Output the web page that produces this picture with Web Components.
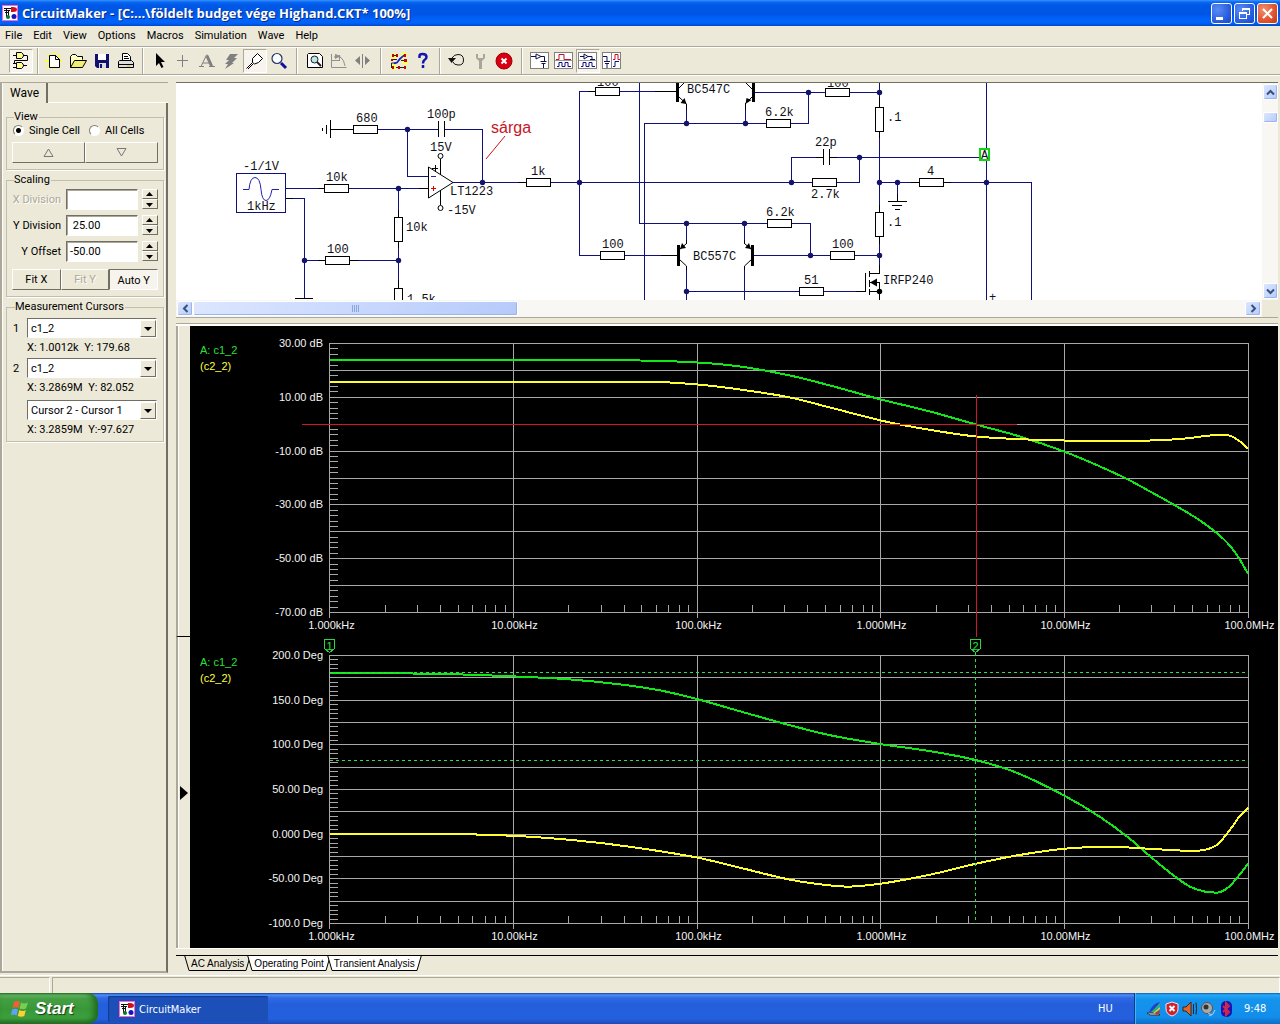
<!DOCTYPE html>
<html lang="hu">
<head>
<meta charset="utf-8">
<title>CircuitMaker</title>
<style>
html,body{margin:0;height:100%}
body{background:#ece9d8;font:11px Roboto,"Liberation Sans",sans-serif;color:#000;
--face:#ece9d8;--shade:#aca899;--dark:#716f64;--ui:"DejaVu Sans Condensed","Noto Sans",sans-serif}
</style>
</head>
<body>
<cm-app></cm-app>
<script>
const define = (name, css, html, setup) => customElements.define(name, class extends HTMLElement {
  connectedCallback() {
    if (this.shadowRoot) return;
    const root = this.attachShadow({ mode: 'open' });
    const t = document.createElement('template');
    t.innerHTML = `<style>*{box-sizing:border-box}button,input,select{font:inherit;color:inherit;margin:0;padding:0;border-radius:0}svg{display:block}${css}</style>` +
      (typeof html === 'function' ? html(this) : html);
    root.append(t.content.cloneNode(true));
    if (setup) setup(this, root);
  }
});

/* ---------- application mark ---------- */
define('cm-logo', ':host{display:block;width:16px;height:16px}', `
<svg width="16" height="16" viewBox="0 0 16 16" shape-rendering="crispEdges">
<rect x=".5" y=".5" width="15" height="15" fill="#fff" stroke="#f6c"/>
<path d="M2 3.500h8M2 5.500h6M4.500 3v9M3 7.500h3M6.500 5v6" stroke="#111" fill="none"/>
<g shape-rendering="auto"><path d="M9 2h2q4 0 4 2.500t-4 2.500H9z" fill="#d01020"/><circle cx="6" cy="12" r="2" fill="#0a7a30"/><circle cx="12" cy="11.500" r="2.500" fill="#1414c0"/></g>
</svg>`);

/* ---------- title bar ---------- */
define('title-bar', `
:host{display:flex;align-items:center;height:26px;flex:none;padding:0 2px;gap:4px;color:#fff;
background:linear-gradient(#3a94ff 0,#0a6af4 2px,#0058e6 5px,#0055e5 14px,#0064fb 20px,#0062fa 23px,#0049c8 26px)}
h1{margin:0;flex:1;font:bold 13px/24px "Open Sans","Trebuchet MS",sans-serif;text-shadow:1px 1px #0a2a80;white-space:nowrap;overflow:hidden}
.b{display:flex;gap:2px}
button{width:21px;height:21px;border:1px solid #fff;border-radius:3px;background:radial-gradient(circle at 30% 30%,#5a8cf4,#2458dc 70%,#1c48c0)}
button.x{background:radial-gradient(circle at 30% 30%,#f09070,#e0522c 60%,#c03a18)}
`, `<cm-logo></cm-logo><h1>CircuitMaker - [C:...\\földelt budget vége Highand.CKT* 100%]</h1>
<div class="b">
<button aria-label="Minimize"><svg width="19" height="19"><path d="M4 13h7v3h-7z" fill="#fff"/></svg></button>
<button aria-label="Restore"><svg width="19" height="19" fill="none" stroke="#fff" shape-rendering="crispEdges"><path d="M7.500 7V4.500h7v6H12M7 5h8" /><path d="M4.500 8.500h7v6h-7zM4 9.500h8"/></svg></button>
<button class="x" aria-label="Close"><svg width="19" height="19"><path d="M5 5l9 9M14 5l-9 9" stroke="#fff" stroke-width="2"/></svg></button>
</div>`);

/* ---------- menu ---------- */
define('menu-bar', `
:host{display:flex;height:22px;flex:none;padding:0 5px;gap:11px;background:var(--face);border-bottom:1px solid #fff;box-shadow:inset 0 -1px var(--shade)}
button{background:none;border:0;height:19px;line-height:19px}
`, ['File','Edit','View','Options','Macros','Simulation','Wave','Help'].map(m => `<button>${m}</button>`).join(''));

/* ---------- toolbar ---------- */
const I = {
gates:`<g fill="#ffff90" stroke="#000"><path d="M5.500 1.500h5q4 3 0 6h-5z"/><path d="M5.500 11.500h5q4 3 0 6h-5z"/></g><path d="M2 4.500h3M12 4.500h4M2 12.500h3M2 16.500h3M12 14.500h4M3.500 9.500h13v-5M3.500 9.500v3" stroke="#000"/>`,
neu:`<path d="M4 4l12 12M16 4L3 16M10 1v17M1 10h17" stroke="#ffff30" stroke-width="2"/><path d="M5.500 4.500h6l4 4v8h-10z" fill="#fff" stroke="#000"/><path d="M11.500 4v4.500H16" stroke="#000"/>`,
open:`<path d="M2.500 16.500v-11l2-2h3l2 2h5v3" fill="#ffffc0" stroke="#000"/><path d="M2.500 16.500l4-7h12l-4 7z" fill="#f4ee70" stroke="#000"/>`,
save:`<path d="M3 3h14v14h-12l-2-2z" fill="#101070"/><path d="M6 3h8v6h-8z" fill="#fff"/><path d="M7 12h7v5h-7z" fill="#ddd"/><path d="M8 13h2v4h-2z" fill="#101070"/>`,
print:`<path d="M6.500 9.500v-7h5l3 3v4" fill="#fff" stroke="#000"/><path d="M8 5.500h4M8 7.500h5" stroke="#000"/><path d="M3.500 9.500h12l2 2v5h-15v-6z" fill="#ddd" stroke="#000"/><path d="M3 13.500h15" stroke="#000"/><path d="M11 15h3" stroke="#cc0" stroke-width="1"/>`,
arrow:`<path d="M7 2v13l3-3 2.500 5 2-1-2.500-5h4z" fill="#000"/>`,
plus:`<path d="M9.500 4v12M4 9.500h11" stroke="#808080"/>`,
big:`<path d="M4 15.500L9.500 4h1l5 11.500M6 12h7M2 15.500h5M12 15.500h6" stroke="#808080" stroke-width="1"/><path d="M10 5l4.500 10" stroke="#808080" stroke-width="3"/>`,
bolt:`<path d="M9 3h8l-4 4h3l-5 5h2l-9 6 3-5h-3l4-4h-3z" fill="#808080"/>`,
probe:`<path d="M1.500 17.500l6-6M3 18l5-5" stroke="#000"/><path d="M7.500 11.500v-4l5-5 5 5-4 4-4 1.500z" fill="#fff" stroke="#000"/>`,
zoom:`<circle cx="8" cy="7.500" r="5" fill="#f8ffff" stroke="#303060" stroke-width="1.200"/><path d="M12 12l5 5" stroke="#1010a0" stroke-width="3"/>`,
fit:`<path d="M3.500 2.500h11l3 3v11h-15v-13z" stroke="#000" fill="#fff"/><circle cx="9.500" cy="8.500" r="3.500" fill="#b8e8e8" stroke="#222"/><path d="M12 11l4 4" stroke="#222" stroke-width="2"/>`,
rot:`<path d="M2.500 3v13.500h15M2 9.500h8M10.500 4v6M5 6q9-3 11 9" stroke="#909090"/><path d="M12 5l-6-2v5z" fill="#909090"/>`,
flip:`<path d="M9.500 3v14" stroke="#808080"/><path d="M7 5v9l-5-4.500zM12 5v9l5-4.500z" fill="#808080"/>`,
wires:`<g fill="#ffff60"><circle cx="5" cy="5" r="3"/><circle cx="15" cy="4" r="3"/><circle cx="5" cy="16" r="3"/><circle cx="16" cy="11" r="3"/></g><path d="M2.500 17v-5h5l8-8M3 8.500h5M12 9.500h5M3 4.500h5M7 16.500h10" stroke="#222"/><path d="M5 12.500l3-1 3-4 5-4" stroke="#1020d0" stroke-width="1.500"/><g fill="#c00018"><path d="M3 3h2v3h-2zM7 3h2v3h-2zM15 3h2v3h-2zM2 8h2v2h-2zM15 8h3v3h-3zM3 15h2v3h-2zM9 15h2v3h-2zM15 15h2v3h-2z"/></g>`,
help:`<path d="M6.500 7V5q0-2 3-2 4 0 4 3 0 2-2 3-1.500 1-1.500 3.500M10 14v3" stroke="#1414b0" stroke-width="2.500"/>`,
undo:`<path d="M6 7q2-3.500 6-3.500 5.500 0 5.500 5.500t-5.500 5q-4 0-5-3" stroke="#111"/><path d="M2 7h8l-4.500 5z" fill="#111"/>`,
wrench:`<path d="M6 3v4l3 3v8h3v-8l3-3v-4h-2v4h-5v-4z" fill="#a8a59a"/>`,
stop:`<circle cx="10" cy="10" r="8" fill="#d80010" stroke="#900"/><path d="M7.500 7.500l5 5M12.500 7.500l-5 5" stroke="#fff" stroke-width="2"/>`,
v1:`<rect x=".5" y="1.500" width="18" height="16" fill="#fff" stroke="#808080"/><path d="M1 5.500h5M11 5.500h3.500v5M10.500 10.500h6M11.500 12.500h4M13.500 13v4" stroke="#101050"/><path d="M6 3l5 2.500L6 8z" stroke="#101050" fill="#fff"/>`,
v2:`<rect x=".5" y="1.500" width="18" height="16" fill="#fff" stroke="#808080"/><path d="M2 8.500h3v-5h5v5h7" stroke="#c01020"/><path d="M1 9.500h17" stroke="#999"/><path d="M3 15.500h2v-4h3v4h3v-4h3v4h3" stroke="#101080"/>`,
v3:`<rect x=".5" y="1.500" width="18" height="16" fill="#fff" stroke="#808080"/><path d="M2 5.500h4M10 5.500h4v3M12 8.500h5" stroke="#101050"/><path d="M6 3l4 2.500L6 8z" stroke="#101050" fill="#fff"/><path d="M1 9.500h17" stroke="#999"/><path d="M3 15.500h2v-4h3v4h3v-4h3v4h3" stroke="#101080"/>`,
v4:`<rect x=".5" y="1.500" width="18" height="16" fill="#fff" stroke="#808080"/><path d="M1 5.500h4v5M2 10.500h6M3 12.500h4M5 13v4" stroke="#101050"/><path d="M9.500 2v15" stroke="#888"/><path d="M11 8.500h2v-5h3v5h2" stroke="#c01020"/><path d="M11 15.500h2v-5h4" stroke="#101080"/>`
};
define('tool-button', `
:host{display:block;width:24px;height:24px}
button{width:24px;height:24px;border:1px solid transparent;background:none;display:grid;place-items:center}
:host([pressed]) button{border-color:var(--shade) #fff #fff var(--shade);background:#f6f4ec}
`, el => `<button aria-label="${el.getAttribute('icon')}"><svg width="20" height="20" viewBox="0 0 20 20" fill="none">${I[el.getAttribute('icon')]}</svg></button>`);
const tools = [['gates!'],['neu','open','save','print'],['arrow','plus','big','bolt','probe!','zoom'],['fit','rot','flip'],['wires','help'],['undo','wrench','stop'],['v1','v2','v3!','v4']];
const wide = [3,4,6];
define('tool-bar', `
:host{display:flex;align-items:center;height:28px;flex:none;padding:0 9px 2px;border-bottom:1px solid #fff;box-shadow:inset 0 -1px var(--shade)}
i{width:9px;height:26px;display:flex;justify-content:center}
i.w{width:12px}
i::before{content:"";border-left:1px solid var(--shade);border-right:1px solid #fff}
`, tools.map((g, n) => (n ? `<i class="${wide.includes(n) ? 'w' : ''}"></i>` : '') +
  g.map(k => `<tool-button icon="${k.replace('!','')}"${k.endsWith('!') ? ' pressed' : ''}></tool-button>`).join('')).join(''));

/* ---------- side panel ---------- */
const up = '<svg width="15" height="9"><path d="M7.500 2l3.500 4h-7z"/></svg>', down = '<svg width="15" height="9"><path d="M7.500 7l3.500-4h-7z"/></svg>';
define('spin-row', `
:host{display:flex;height:26px;align-items:center;justify-content:flex-end;gap:4px}
label{margin-right:1px}
:host([off]) label{color:var(--shade);text-shadow:1px 1px #fff}
input{width:72px;height:21px;padding:0 3px;background:#fff;border:1px solid;border-color:var(--dark) #fff #fff var(--dark);box-shadow:inset 1px 1px #aca899}
div{display:grid;width:16px}
button{height:10px;background:var(--face);border:1px solid;border-color:#fff var(--dark) var(--dark) #fff}
svg{margin:-1px}
`, el => `<label for="v">${el.getAttribute('label')}</label><input id="v" value="${el.getAttribute('value') || ''}"${el.hasAttribute('off') ? ' disabled' : ''}><div><button aria-label="Up">${up}</button><button aria-label="Down">${down}</button></div>`);
define('cursor-select', `
:host{display:grid;grid-template-columns:14px 130px;align-items:center}
div{position:relative}
select{appearance:none;width:100%;height:20px;background:#fff;padding-left:3px;border:1px solid;border-color:var(--dark) #fff #fff var(--dark);outline:0}
span{position:absolute;right:1px;top:2px;width:16px;height:17px;background:var(--face);border:1px solid;border-color:#fff var(--dark) var(--dark) #fff;pointer-events:none;display:grid;place-items:center}
output{grid-column:2;line-height:20px;white-space:pre}
`, el => `<label for="s">${el.getAttribute('label') || ''}</label><div><select id="s" aria-label="Cursor trace"><option>${el.getAttribute('value')}</option></select><span><svg width="8" height="4"><path d="M0 0h8l-4 4z"/></svg></span></div><output>${el.getAttribute('reading')}</output>`);
define('wave-panel', `
:host{display:flex;flex-direction:column;width:168px;flex:none;border-left:2px solid var(--shade);box-shadow:inset 1px 0 #fff;border-top:1px solid var(--shade);margin-right:5px}
nav{display:flex;height:20px}
nav button{width:46px;border:0;background:none;border-right:2px solid var(--dark);font-size:12px;text-align:left;padding:0 0 0 8px}
nav::after{content:"";flex:1;border-bottom:1px solid #fff}
section{flex:1;border-right:2px solid var(--dark);border-bottom:2px solid var(--shade);padding:8px 2px 0 4px;display:flex;flex-direction:column;gap:4px}
fieldset{margin:0;min-width:0;border:1px solid #c2beac;box-shadow:1px 1px #fff;padding:0 5px 6px}
legend{padding:0 1px 0 0;margin-left:2px;line-height:12px;background:var(--face)}
.r{display:flex;align-items:center;height:15px;gap:5px;margin:0 0 4px 1px}
.r label{margin-right:4px}
input[type=radio]{appearance:none;width:11px;height:11px;margin:0;border-radius:50%;background:#fff;border:1px solid;border-color:#808070 #fff #fff #808070;flex:none}
input[type=radio]:checked{background:radial-gradient(circle,#000 2px,#fff 3px)}
.b{display:flex}
spin-row + .b{margin-top:5px}
.b button{flex:1;height:21px;background:var(--face);border:1px solid;border-color:#fff var(--dark) var(--dark) #fff;display:grid;place-items:center}
.b button.p{border-color:var(--dark) #fff #fff var(--dark);background:#f6f4ec;padding-top:2px}
.b button:disabled{color:var(--shade);text-shadow:1px 1px #fff}
.c{display:grid;padding:0 5px 1px 6px}
legend + cursor-select{margin-top:5px}
cursor-select:last-child{margin-top:2px}
`, `<nav><button>Wave</button></nav><section>
<fieldset><legend>View</legend><div class="r"><input type="radio" name="v" id="a" checked><label for="a">Single Cell</label><input type="radio" name="v" id="b"><label for="b">All Cells</label></div>
<div class="b"><button aria-label="Previous"><svg width="11" height="9" fill="none" stroke="#777"><path d="M5.500 1l4.500 7.500H1z"/></svg></button><button aria-label="Next"><svg width="11" height="9" fill="none" stroke="#777"><path d="M5.500 8l4.500-7.500H1z"/></svg></button></div></fieldset>
<fieldset><legend>Scaling</legend><spin-row label="X Division" off></spin-row><spin-row label="Y Division" value=" 25.00"></spin-row><spin-row label="Y Offset" value="-50.00"></spin-row>
<div class="b"><button>Fit X</button><button disabled>Fit Y</button><button class="p">Auto Y</button></div></fieldset>
<fieldset class="c"><legend>Measurement Cursors</legend><cursor-select label="1" value="c1_2" reading="X: 1.0012k  Y: 179.68"></cursor-select>
<cursor-select label="2" value="c1_2" reading="X: 3.2869M  Y: 82.052"></cursor-select>
<cursor-select value="Cursor 2 - Cursor 1" reading="X: 3.2859M  Y:-97.627"></cursor-select></fieldset></section>`);

/* ---------- scroll bars ---------- */
define('scroll-bar', `
:host{display:flex;background:#f8f7f3;padding:1px;gap:0}
:host([vertical]){flex-direction:column}
button,b{display:grid;place-items:center;background:linear-gradient(135deg,#dce6ff,#b6cafa);border:1px solid #fff;border-radius:2px;box-shadow:inset -1px -1px #9ab4ee;flex:none;width:16px;height:15px}
:host([vertical]) button{width:15px;height:16px}
s{flex:1}
`, el => {
  const v = el.hasAttribute('vertical');
  const arrow = a => `<svg width="9" height="9" style="rotate:${a}deg"><path d="M1 6.500l3.500-3.500L8 6.500" fill="none" stroke="#35507c" stroke-width="2"/></svg>`;
  const thumb = el.getAttribute('thumb'), off = el.getAttribute('offset');
  const box = v ? `width:15px;height:${thumb}px;margin-top:${off}px` : `width:${thumb};height:15px;margin-left:${off}px`;
  const grip = v ? '' : '<svg width="9" height="7"><path d="M1.500 0v7M3.500 0v7M5.500 0v7M7.500 0v7" stroke="#8ca6e0"/></svg>';
  return `<button aria-label="Back">${arrow(v ? 0 : 270)}</button><b style="${box}">${grip}</b><s></s><button aria-label="Forward">${arrow(v ? 180 : 90)}</button>`;
});

/* ---------- schematic ---------- */
const R = (x, y) => `<rect x="${x}.5" y="${y}.5" width="24" height="8"/>`;
const RV = (x, y) => `<rect x="${x}.5" y="${y}.5" width="8" height="24"/>`;
const dots = [[407.5,129.5],[482.5,182.5],[398.5,188.5],[304.5,260.5],[398.5,260.5],[579.5,182.5],[686.5,123.5],[745.5,123.5],[808.5,92.5],[879.5,92.5],[686.5,223.5],[744.5,223.5],[810.5,255.5],[879.5,255.5],[686.5,291.5],[791.5,182.5],[859.5,157.5],[879.5,182.5],[897.5,182.5],[986.5,182.5]];
const notes = [['680',356,122],['100p',427,118],['15V',430,151],['-1/1V',243,170],['10k',326,181],['LT1223',450,195],['-15V',447,214],['10k',406,231],['1kHz',247,210],['100',327,253],['1.5k',407,303],['1k',531,175],['100',597,86],['100',602,248],['BC547C',687,93],['6.2k',765,116],['100',827,87],['BC557C',693,260],['6.2k',766,216],['100',832,248],['51',804,284],['22p',815,146],['2.7k',811,198],['.1',887,121],['.1',887,226],['4',927,175],['IRFP240',883,284],['+',989,301],['A',981,159]];
define('schematic-view', `
:host{display:block;background:#fff;overflow:hidden;min-width:0;height:217px}
.w{stroke:#10107a}.k{stroke:#000}.r{stroke:#000;fill:#fff}
text{font:12px "Liberation Mono","Courier New",monospace;fill:#101018}
.red{font:16px "Liberation Sans",Arial,sans-serif;fill:#c8141e}
`, `<svg width="1086" height="217" viewBox="176 83 1086 217" fill="none">
<g shape-rendering="crispEdges"><path class="w" d="M378 129.500H438M445 129.500H482.500V182.500M407.500 129.500V176.500H428M286 188.500H428M286 198.500H304.500V298M304.500 260.500H398.500M398.500 188.500V288M453 182.500H812M579.500 255.500V91.500H677M579.500 255.500H678M639.500 83V223.500H767M644.500 300V123.500H766M790 123.500H808.500V92.500M755 92.500H879.500M791 223.500H810.500V255.500M754 255.500H879.500M686.500 300V291.500H865M686.500 110V123M745.500 110V123M686.500 223V240M744.500 223V240M686.500 270V300M744.500 270V300M791.500 182.500V157.500H822M831 157.500H979M859.500 157.500V182.500H837M879.500 83V265M879.500 182.500H1031.500V300M986.500 83V300M897.500 182.500V194"/>
<path class="k" d="M330.500 120V138M326.500 125V134M322.500 128V131M331 129.500H353M438.500 121V137M444.500 121V137M440.500 159V175M440.500 190V205M318 188.500H324M419 188.500H428M286 198.500H293M295 298.500H313M398.500 210V217M398.500 241V248M398.500 280V289M318 260.500H325M350 260.500H358M518 182.500H526M588 91.500H595M655 91.500H677M661 255.500H678M686.500 104V110M745.500 104V110M823.500 149V165M829.500 149V165M816 157.500H823M830 157.500H837M897.500 194V201M888 201.500H907M892 205.500H902M895 209.500H900M879.500 97V107M879.500 132V138M879.500 205V212M879.500 237V244M911 182.500H919M944 182.500H951M879.500 265V273.500H869M856 291.500H865.500V273M869.500 271V277M869.500 280V287M869.500 289V295M869 282.500H879.500V300M869 291.500H879M686.500 240V244M744.500 240V244M686.500 266V270M744.500 266V270M432 168.500H438M435.500 165V172"/>
<g class="r">${R(353,125)}${R(324,184)}${R(325,256)}${RV(394,217)}${RV(394,288)}${R(526,178)}${R(595,87)}${R(600,251)}${R(766,119)}${R(767,219)}${R(825,88)}${R(830,251)}${R(799,287)}${R(812,178)}${RV(875,107)}${RV(875,212)}${R(919,178)}</g>
<rect x="236.500" y="173.500" width="49" height="39" class="w"/>
<path d="M677.500 83V102M753.500 83V102M678.500 245V266M752.500 245V266" stroke="#000" stroke-width="3"/>
<path d="M431 176.500H436" stroke="#22a"/><path d="M431 188.500H436M433.500 186V191" stroke="#d00"/></g>
<path d="M243 189.500h6q1-12 6-12t6 12q1 11 5 11t6-11h7" stroke="#2222a8"/>
<path class="k" d="M428.500 167V198L453 182.500z"/><g class="k" fill="#fff"><circle cx="440.500" cy="156" r="2.500"/><circle cx="440.500" cy="208" r="2.500"/></g>
<path class="k" d="M678 89l6-6M752 89l-6-6M679 97l7.500 7M752 97l-7 7M679 250l7.500-6.500M752 250l-7.500-6.500M679 259l7.500 7M752 259l-7.500 7"/>
<path fill="#000" d="M686.500 104l-6-1 4-5zM745.500 104l1-6 5 2zM680 249l2-6 4 5zM751 249l-2-6-4 5zM870 282.500l7-4v8z"/>
<g fill="#14146a">${dots.map(d => `<circle cx="${d[0]}" cy="${d[1]}" r="2.700"/>`).join('')}</g><circle cx="879.500" cy="291.500" r="2.700" fill="#000"/>
<rect x="980" y="149" width="9" height="11" stroke="#10d810" stroke-width="2" fill="#fff"/>
<path d="M505 136L486 159" stroke="#c8141e"/>
${notes.map(n => `<text x="${n[1]}" y="${n[2]}">${n[0]}</text>`).join('')}
<text class="red" x="491" y="133">sárga</text></svg>`);

/* ---------- waveform cell ---------- */
const P = s => s.split(' ').map(p => p.split(',').map(Number));
/* traces: x along a 918-unit axis, y along a 269-unit axis */
const cells = {
  gain: { top: 17, divs: 10, labels: ['30.00 dB','10.00 dB','-10.00 dB','-30.00 dB','-50.00 dB','-70.00 dB'],
    green: P('0,16 230,16 310,17 368,19 410,23 460,32 500,42 551,56 600,68 646,81 690,93 734,108 770,123 796,135 820,148 847,163 870,177 886,189 897,199 906,210 918,230'),
    yellow: P('0,38 310,38 368,41 410,46 460,54 500,64 551,77 575,82 610,88 646,93 698,96 734,97 820,97 855,95 880,92 893,91 902,93 910,98 918,105') },
  phase: { top: 18, divs: 12, labels: ['200.0 Deg','150.0 Deg','100.0 Deg','50.00 Deg','0.000 Deg','-50.00 Deg','-100.0 Deg'],
    green: P('0,18 70,18 130,19 184,21 240,24 290,29 330,35 368,44 410,56 460,70 500,80 551,89 600,96 646,105 685,117 735,141 770,162 800,184 816,198 840,218 860,232 875,237 887,238 898,233 908,222 918,209'),
    yellow: P('0,179 90,179 184,181 250,186 300,192 368,203 410,213 460,225 485,229 518,232 551,229 600,220 646,209 685,201 734,194 780,192 820,194 860,196 875,195 887,190 900,175 910,161 918,153') }
};
function curve(pts) {
  const n = pts.length, m = [], d = [];
  for (let i = 0; i < n - 1; i++) d.push((pts[i+1][1] - pts[i][1]) / (pts[i+1][0] - pts[i][0]));
  for (let i = 0; i < n; i++) m.push(i === 0 ? d[0] : i === n - 1 ? d[n-2] : d[i-1] * d[i] <= 0 ? 0 : (d[i-1] + d[i]) / 2);
  let s = `M${pts[0]}`;
  for (let i = 0; i < n - 1; i++) {
    const h = (pts[i+1][0] - pts[i][0]) / 3;
    s += `C${pts[i][0]+h} ${pts[i][1]+m[i]*h} ${pts[i+1][0]-h} ${pts[i+1][1]-m[i+1]*h} ${pts[i+1]}`;
  }
  return s;
}
function drawCell(kind, w, h) {
  const c = cells[kind], L = 140, W = w - L - 30, T = c.top, H = h - 25 - T;
  const X = f => Math.floor(L + f * W) + .5, Y = f => Math.round(T + f * H) + .5;
  let grid = '', tick = '', txt = '';
  for (let i = 0; i <= c.divs; i++) grid += `M${L} ${Y(i / c.divs)}H${X(1)}`;
  for (let i = 0; i < c.divs * 5; i++) tick += `M${L} ${Y(i / c.divs / 5)}h8`;
  for (let i = 0; i <= 5; i++) {
    grid += `M${i ? X(i / 5) : L - .5} ${T}V${Y(1) + 5}`;
    if (i < 5) for (let k = 2; k < 10; k++) tick += `M${X((i + Math.log10(k)) / 5)} ${Y(1)}v-8`;
    txt += `<text x="${X(i / 5) + 1}" y="${Y(1) + 16.5}" text-anchor="middle">${['1.000kHz','10.00kHz','100.0kHz','1.000MHz','10.00MHz','100.0MHz'][i]}</text>`;
  }
  c.labels.forEach((l, i) => txt += `<text x="133" y="${Y(i / (c.labels.length - 1)) + 3.5}" text-anchor="end">${l}</text>`);
  const map = a => a.map(p => [L + p[0] / 918 * W, T + p[1] / 269 * H + .5]);
  const cx = X(646 / 918);
  let extra = '';
  if (kind === 'gain') extra = `<path fill="none" stroke="#d01828" d="M112 ${Y(.3)}H${cx + 40}M${cx} ${Y(.19)}V${h}"/>`;
  else {
    const flag = (x, n) => `<path stroke="#28d840" fill="#000" d="M${x - 5} 2.500h10v9l-5 4l-5 -4z"/><text class="g" x="${x}" y="13" text-anchor="middle">${n}</text>`;
    extra = `<path fill="none" stroke="#2ce048" stroke-dasharray="3 3" d="M${L} ${T - .5}m0 18H${X(1)}M${L} ${T + 105.5}H${X(1)}M${cx - 1} 16V${Y(1)}"/>` + flag(L - .5, 1) + flag(cx - 1, 2);
  }
  return `<g shape-rendering="crispEdges" fill="none"><path stroke="#a8a8a8" d="${grid}${tick}"/>
  <path stroke="#10e818" stroke-width="2" d="${curve(map(c.green))}"/><path stroke="#ffff30" stroke-width="2" d="${curve(map(c.yellow))}"/></g>
  <g shape-rendering="crispEdges">${extra}</g>
  <text class="g" x="10" y="${T + 11}">A: c1_2</text><text class="y" x="10" y="${T + 27}">(c2_2)</text>${txt}`;
}
define('wave-cell', `
:host{display:flex;flex:1;min-height:0;background:#000}
aside{width:14px;flex:none;background:var(--face);border-left:2px solid var(--shade);box-shadow:inset 1px 0 #fff;display:flex;align-items:center;justify-content:center}
:host([divider]) aside{border-bottom:1px solid #000}
figure{margin:0;flex:1;min-width:0;overflow:hidden}
text{font:11px "Liberation Sans",Arial,sans-serif;fill:#f4f4f4}
text.g{fill:#28e038}text.y{fill:#ffff40}
`, el => `<aside>${el.hasAttribute('active') ? '<svg width="8" height="14"><path d="M0 0v14l8-7z"/></svg>' : ''}</aside><figure><svg></svg></figure>`,
(el, root) => {
  const fig = root.querySelector('figure'), svg = fig.querySelector('svg');
  const paint = () => {
    const w = fig.clientWidth, h = el.clientHeight;
    if (!w || !h) return;
    svg.setAttribute('width', w); svg.setAttribute('height', h);
    svg.innerHTML = drawCell(el.getAttribute('kind'), w, h);
  };
  requestAnimationFrame(paint);
  new ResizeObserver(paint).observe(el);
});

/* ---------- sheet tabs ---------- */
define('sheet-tabs', `
:host{display:flex;flex:none;height:18px;border-top:1px solid #000;padding-left:8px;font:10px "Liberation Sans",Arial,sans-serif}
div{display:flex;height:15px;margin-right:-4px;--f:#fff}
div.on{--f:var(--face)}
svg{fill:var(--f);stroke:#000;flex:none}
button{border:0;border-bottom:1px solid #000;background:var(--f);height:15px;line-height:15px;padding:0 1px;white-space:nowrap}
`, ['AC Analysis','Operating Point','Transient Analysis'].map((t, i) => `<div class="${i ? '' : 'on'}"><svg width="6" height="15"><path d="M.5 -1L5 14.500H8V-1"/></svg><button>${t}</button><svg width="6" height="15"><path d="M5.500 -1L1 14.500H-2V-1"/></svg></div>`).join(''));

/* ---------- status bar ---------- */
define('status-bar', `
:host{display:flex;flex:none;height:18px;gap:2px;border-top:1px solid #fff}
span{width:50px;border-top:1px solid var(--shade);border-right:1px solid #fff;margin-top:1px}
span+span{flex:1;border-left:1px solid var(--shade)}
`, '<span></span><span></span>');

/* ---------- taskbar ---------- */
define('task-bar', `
:host{display:flex;flex:none;height:31px;color:#fff;font-family:var(--ui);background:linear-gradient(#1941a5 0,#4c8ef5 2px,#2e68e4 5px,#245edb 12px,#2460de 26px,#1c48b8 31px)}
.start{width:98px;border:0;border-radius:0 10px 10px 0;background:linear-gradient(#2e7a2c 0,#70c070 2px,#45a043 6px,#389838 16px,#3ca03c 25px,#267026 31px);box-shadow:inset -4px 0 6px #1e6820;display:flex;align-items:center;gap:6px;padding-left:11px;font:italic bold 17px "Liberation Sans","Trebuchet MS",sans-serif;text-shadow:1px 1px 1px #143c14}
.task{width:160px;height:26px;margin:3px 0 0 10px;border:0;border-radius:2px;background:#1c50b8;box-shadow:inset 1px 1px 1px #123a90;display:flex;align-items:center;gap:4px;padding-left:11px}
.lang{margin-left:auto;align-self:center;width:36px}
.tray{width:146px;display:flex;align-items:center;gap:2px;padding-left:11px;border-left:1px solid #0c3a90;box-shadow:inset 1px 0 #3cb8f8;background:linear-gradient(#0c60c0 0,#28a8f4 2px,#1494ec 6px,#128eea 24px,#0c6cc4 31px)}
time{margin-left:8px}
`, `<button class="start"><svg width="18" height="18" viewBox="0 0 18 18"><path d="M3 2q3-2 6 0l-1.500 6q-3-1.500-6 0z" fill="#f06030"/><path d="M10 2.500q3 2 7 0l-2 6q-3 1.500-6.500 0z" fill="#78d050"/><path d="M1 9.500q3-1.500 6 0l-1.500 6q-3-2-5.500 0z" fill="#60a0ff"/><path d="M8.300 10q3.500 2 6.500 0l-1.500 6q-3 1.500-6.500 0z" fill="#ffd030"/></svg>Start</button>
<button class="task"><cm-logo></cm-logo>CircuitMaker</button>
<span class="lang">HU</span>
<div class="tray">
<svg width="16" height="16"><path d="M1 12h10l3 2H4z" fill="#eee" stroke="#333"/><path d="M3 11q4-9 11-10l-8 10z" fill="#2040d0"/><path d="M5 11L14 3v2l-7 6z" fill="#30c040"/><path d="M7 12l7-6v2l-5 4z" fill="#e8d020"/><path d="M9 13l5-4v2l-3 3z" fill="#d03020"/></svg>
<svg width="16" height="16"><path d="M8 1l6 2v5q0 5-6 7-6-2-6-7V3z" fill="#d02030" stroke="#e8e8e8"/><path d="M5.500 5l5 5M10.500 5l-5 5" stroke="#fff" stroke-width="2"/></svg>
<svg width="16" height="16"><path d="M1 6h3l5-5v14l-5-5H1z" fill="#e06830" stroke="#402010"/><path d="M11.500 3v10M14 1.500q1 6 0 12" fill="none" stroke="#222"/></svg>
<svg width="16" height="16"><circle cx="7" cy="7" r="5.500" fill="#aaa" stroke="#555"/><circle cx="6" cy="6" r="2.500" fill="#333"/><path d="M9 15q5-1 6-6M8 12l4 2" fill="none" stroke="#bcd"/></svg>
<svg width="16" height="16"><rect x="3" y="0" width="11" height="16" rx="5" fill="#1414b8"/><path d="M5 5l6 6-3 3V2l3 3-6 6" fill="none" stroke="#d02848" stroke-width="2"/></svg>
<time>9:48</time></div>`);

/* ---------- page ---------- */
define('cm-app', `
:host{display:flex;flex-direction:column;min-height:100vh}
main{flex:1;display:flex;min-height:0;padding:6px 2px 2px 0}
.work{flex:1;min-width:0;display:flex;flex-direction:column;margin-left:3px}
.sch{display:grid;grid-template-columns:1fr 16px;border-top:1px solid var(--dark);flex:none}
scroll-bar[h]{height:17px}
hr{flex:none;margin:0;border:0;height:9px;border-top:1px solid var(--shade);border-bottom:1px solid #fff;box-shadow:inset 0 -1px #fff,inset 0 -2px var(--shade)}
.cells{flex:1;display:flex;flex-direction:column;min-height:0;border-bottom:1px solid #fff;margin-bottom:6px}
`, `<title-bar></title-bar><menu-bar></menu-bar><tool-bar></tool-bar>
<main><wave-panel></wave-panel><div class="work">
<div class="sch"><schematic-view></schematic-view><scroll-bar vertical thumb="11" offset="12"></scroll-bar><scroll-bar h thumb="30%" offset="0"></scroll-bar></div>
<hr><div class="cells"><wave-cell kind="gain" divider></wave-cell><wave-cell kind="phase" active></wave-cell></div>
<sheet-tabs></sheet-tabs></div></main>
<status-bar></status-bar><task-bar></task-bar>`);
</script>
</body>
</html>
